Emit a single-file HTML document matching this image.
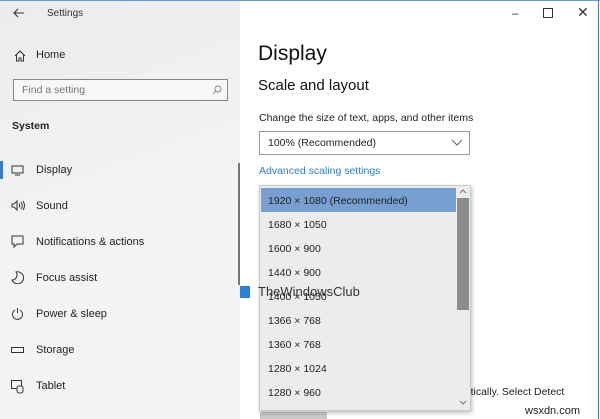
<!DOCTYPE html><html><head><style>
body{margin:0;width:600px;height:419px;overflow:hidden;font-family:"Liberation Sans",sans-serif;background:#fff;position:relative}
.a{position:absolute;white-space:nowrap}
.side{position:absolute;left:0;top:0;width:240px;height:419px;background:linear-gradient(160deg,#ececee,#f4f4f5 60%,#f2f2f3)}
.nav{position:absolute;left:36px;font-size:11px;color:#222}
.ic{position:absolute;left:11px}
</style></head><body>
<div class="side"></div>
<div style="position:absolute;right:1px;top:0;width:1px;height:419px;background:#3a78c8"></div>
<div style="position:absolute;left:0;top:0;width:600px;height:1px;background:#6a9ad6"></div>
<svg class="a" style="left:13px;top:8px" width="12" height="10"><path d="M11 5H1M5 1L1 5L5 9" stroke="#333" fill="none" stroke-width="1.1"/></svg>
<div class="a" style="left:47px;top:8px;font-size:10px;color:#333">Settings</div>
<svg class="a" style="left:14px;top:50px" width="12" height="12"><path d="M1 6L6 1L11 6M2.5 5V11H5V8H7V11H9.5V5" stroke="#333" fill="none"/></svg>
<div class="nav" style="top:49px">Home</div>
<div class="a" style="left:13px;top:79px;width:215px;height:22px;border:1.5px solid #888;background:#f7f7f7;box-sizing:border-box"></div>
<div class="a" style="left:22px;top:84px;font-size:10.5px;color:#777">Find a setting</div>
<svg class="a" style="left:212px;top:85px" width="10" height="10"><circle cx="6" cy="4" r="3" stroke="#888" fill="none"/><path d="M4 6L1 9" stroke="#888"/></svg>
<div class="a" style="left:12px;top:120px;font-size:10.5px;font-weight:bold;color:#222">System</div>
<div class="a" style="left:0;top:161px;width:3px;height:18px;background:#3a78c8"></div>
<svg class="ic a" style="top:165px" width="13" height="11"><rect x="1" y="1" width="11" height="7" stroke="#333" fill="none"/><path d="M4 10H9" stroke="#333"/></svg>
<div class="nav" style="top:164px">Display</div>
<svg class="ic a" style="top:200px" width="15" height="11"><path d="M1 4H3L6 1V10L3 7H1Z" stroke="#333" fill="none"/><path d="M8 3.5Q9.5 5.5 8 7.5M10 2Q12.5 5.5 10 9M12 1Q15 5.5 12 10" stroke="#333" fill="none"/></svg>
<div class="nav" style="top:200px">Sound</div>
<svg class="ic a" style="top:235px" width="13" height="13"><path d="M1 1H12V9H6L3 12V9H1Z" stroke="#333" fill="none"/></svg>
<div class="nav" style="top:236px">Notifications &amp; actions</div>
<svg class="ic a" style="top:271px" width="13" height="13"><path d="M5 1A6 6 0 1 1 1 9A5 5 0 0 0 5 1Z" stroke="#333" fill="none"/></svg>
<div class="nav" style="top:272px">Focus assist</div>
<svg class="ic a" style="top:307px" width="13" height="13"><path d="M4 3A5 5 0 1 0 9 3M6.5 1V6" stroke="#333" fill="none"/></svg>
<div class="nav" style="top:308px">Power &amp; sleep</div>
<svg class="ic a" style="top:347px" width="13" height="6"><rect x="0.5" y="0.5" width="12" height="5" stroke="#333" fill="none"/></svg>
<div class="nav" style="top:344px">Storage</div>
<svg class="ic a" style="top:380px" width="14" height="14"><rect x="0.5" y="0.5" width="10" height="8" stroke="#333" fill="none"/><rect x="6" y="6" width="6" height="7" rx="2" stroke="#333" fill="#f3f3f3"/></svg>
<div class="nav" style="top:380px">Tablet</div>
<div class="a" style="left:238px;top:163px;width:2px;height:122px;background:#777"></div>
<div class="a" style="left:240px;top:286px;width:10px;height:12px;background:#2b7fd4"></div>
<div class="a" style="left:512px;top:6px;font-size:12px;color:#333">–</div>
<div class="a" style="left:543px;top:8px;width:8px;height:8px;border:1px solid #333"></div>
<div class="a" style="left:577px;top:4px;font-size:14px;color:#333">✕</div>
<div class="a" style="left:258px;top:42px;font-size:21px;color:#111">Display</div>
<div class="a" style="left:258px;top:77px;font-size:15px;color:#111">Scale and layout</div>
<div class="a" style="left:259px;top:112px;font-size:10.5px;color:#222">Change the size of text, apps, and other items</div>
<div class="a" style="left:259px;top:131px;width:211px;height:24px;border:1.5px solid #999;box-sizing:border-box"></div>
<div class="a" style="left:268px;top:137px;font-size:10.5px;color:#222">100% (Recommended)</div>
<svg class="a" style="left:451px;top:139px" width="12" height="8"><path d="M1 1L6 6L11 1" stroke="#666" fill="none"/></svg>
<div class="a" style="left:259px;top:165px;font-size:10.5px;color:#2f7ccf">Advanced scaling settings</div>
<div class="a" style="left:456px;top:386px;font-size:10.5px;color:#222">matically. Select Detect</div>
<div class="a" style="left:260px;top:412px;width:67px;height:7px;background:#c8c8c8"></div>
<div class="a" style="left:259px;top:185px;width:212px;height:226px;background:#ececec;border:1px solid #c8c8c8;box-sizing:border-box;box-shadow:1px 2px 4px rgba(0,0,0,.25)"></div>
<div class="a" style="left:261px;top:188px;width:195px;height:24px;background:#789fd2"></div>
<div class="a" style="left:457px;top:198px;width:12px;height:112px;background:#8c8c8c"></div>
<svg class="a" style="left:459px;top:188px" width="8" height="6"><path d="M1 5L4 2L7 5" stroke="#777" fill="none"/></svg>
<svg class="a" style="left:459px;top:400px" width="8" height="6"><path d="M1 1L4 4L7 1" stroke="#777" fill="none"/></svg>
<div class="a" style="left:268px;top:195px;font-size:10.5px;color:#222">1920 × 1080 (Recommended)</div>
<div class="a" style="left:268px;top:219px;font-size:10.5px;color:#222">1680 × 1050</div>
<div class="a" style="left:268px;top:243px;font-size:10.5px;color:#222">1600 × 900</div>
<div class="a" style="left:268px;top:267px;font-size:10.5px;color:#222">1440 × 900</div>
<div class="a" style="left:268px;top:291px;font-size:10.5px;color:#222">1400 × 1050</div>
<div class="a" style="left:268px;top:315px;font-size:10.5px;color:#222">1366 × 768</div>
<div class="a" style="left:268px;top:339px;font-size:10.5px;color:#222">1360 × 768</div>
<div class="a" style="left:268px;top:363px;font-size:10.5px;color:#222">1280 × 1024</div>
<div class="a" style="left:268px;top:387px;font-size:10.5px;color:#222">1280 × 960</div>
<div class="a" style="left:258px;top:284px;font-size:13px;color:#333">TheWindowsClub</div>
<div class="a" style="left:525px;top:405px;font-size:11px;color:#222;background:#fff">wsxdn.com</div>
</body></html>
